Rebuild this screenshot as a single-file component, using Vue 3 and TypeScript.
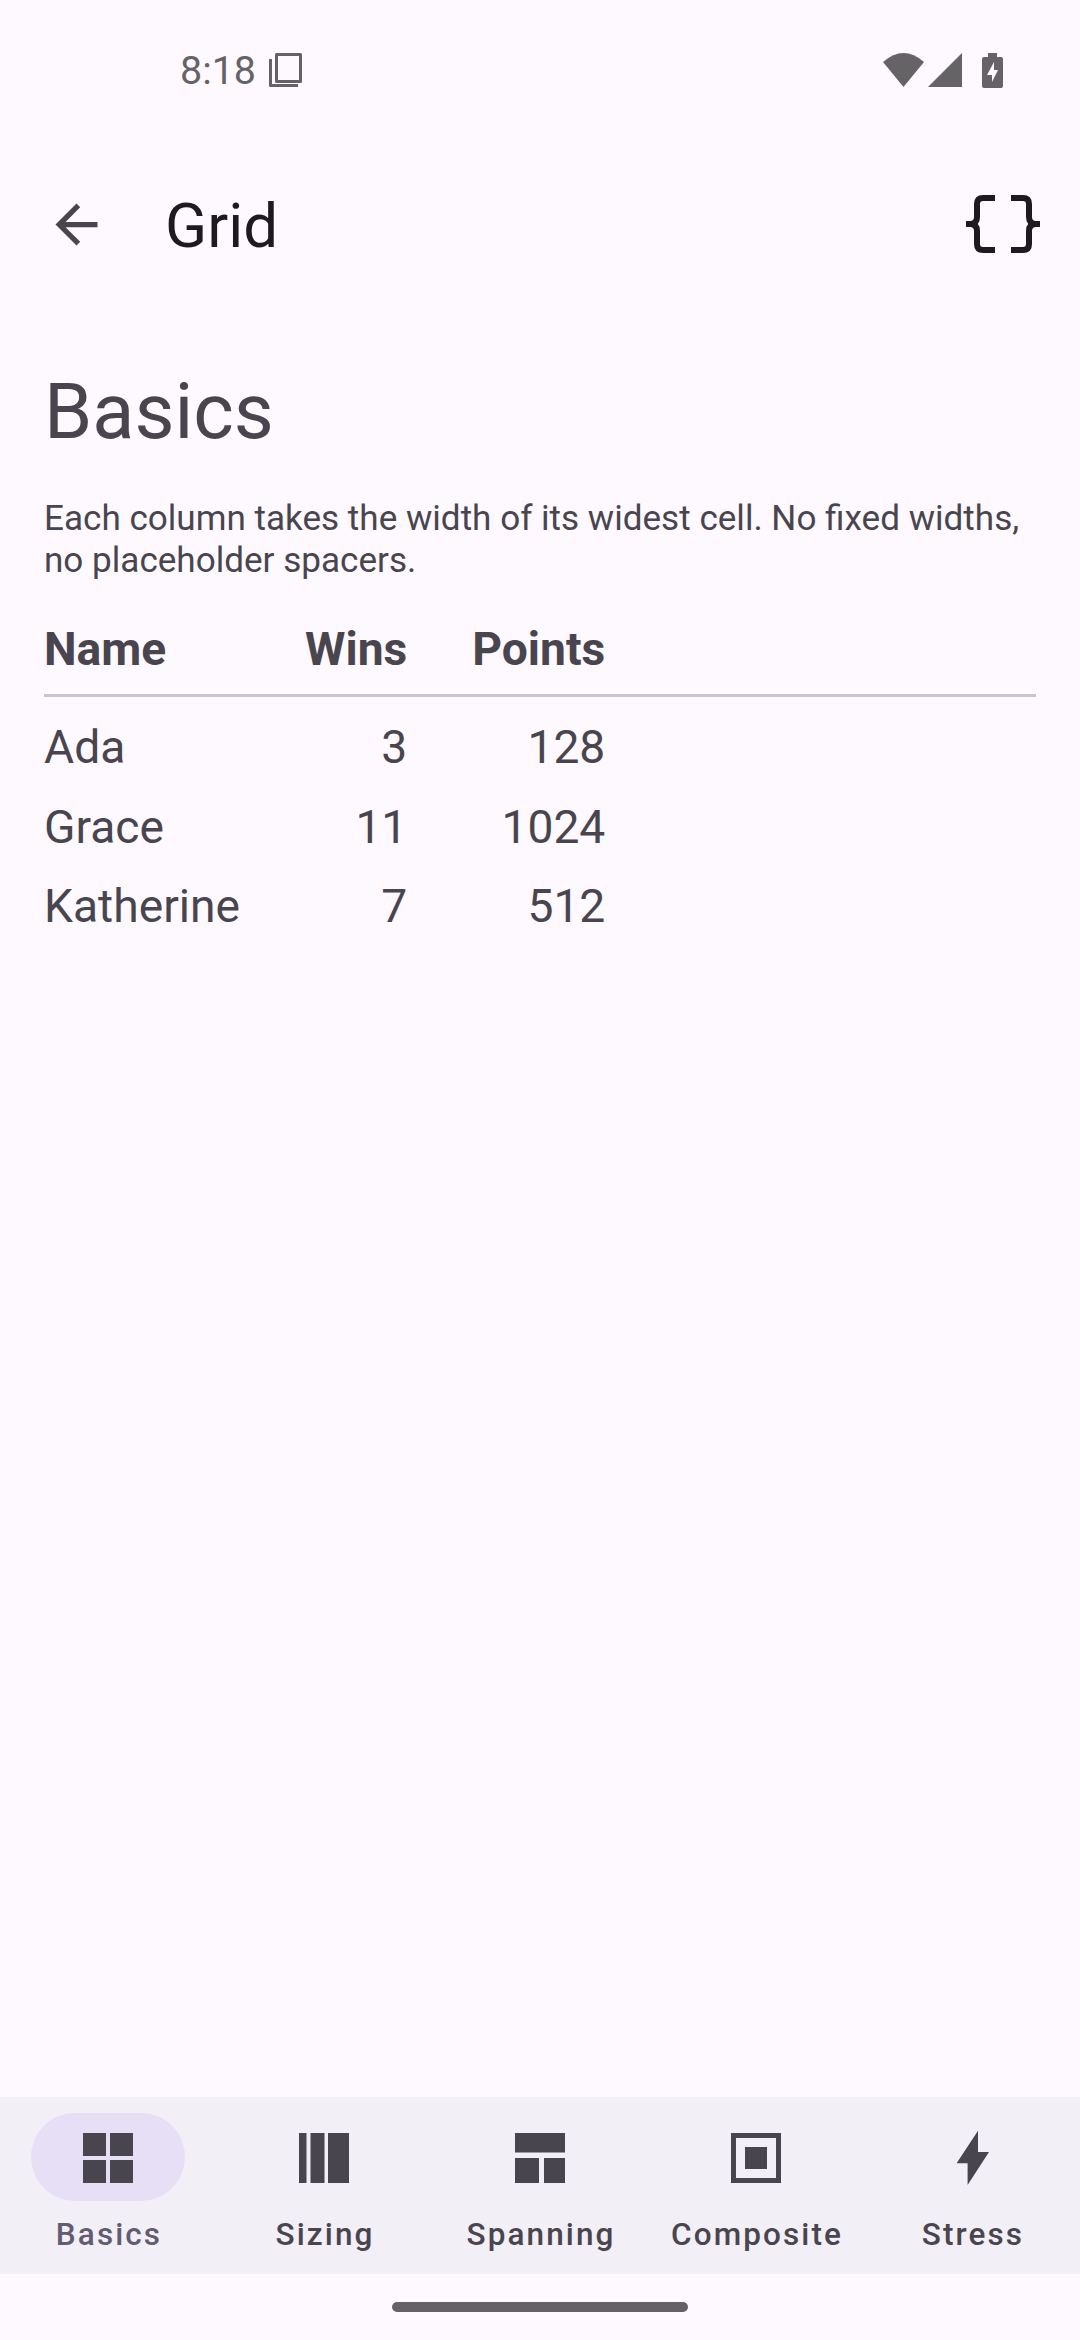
<script setup lang="ts">
interface Rect { x: number; y: number; w: number; h: number }
interface Tab { label: string; rects: Rect[]; path?: string }

const tabs: Tab[] = [
  {
    label: 'Basics',
    rects: [
      { x: 7, y: 7, w: 23, h: 23 },
      { x: 34, y: 7, w: 23, h: 23 },
      { x: 7, y: 34, w: 23, h: 23 },
      { x: 34, y: 34, w: 23, h: 23 },
    ],
  },
  {
    label: 'Sizing',
    rects: [
      { x: 7, y: 7, w: 7.5, h: 50 },
      { x: 18.5, y: 7, w: 14, h: 50 },
      { x: 36, y: 7, w: 21, h: 50 },
    ],
  },
  {
    label: 'Spanning',
    rects: [
      { x: 7, y: 7, w: 50, h: 19.5 },
      { x: 7, y: 32, w: 24, h: 25 },
      { x: 36, y: 32, w: 21, h: 25 },
    ],
  },
  {
    label: 'Composite',
    rects: [],
    path: 'M7 7h50v50H7z M12 12v40h40V12z M21 21h22v22H21z',
  },
  {
    label: 'Stress',
    rects: [],
    path: 'M38 4.7V26H49L27.6 59V37.3H16.6z',
  },
]

const rows = [
  { name: 'Ada', wins: 3, points: 128 },
  { name: 'Grace', wins: 11, points: 1024 },
  { name: 'Katherine', wins: 7, points: 512 },
]
</script>

<template>
  <div class="screen">
    <div class="status">
      <span class="time">8:18</span>
      <svg class="copy" width="33" height="34" viewBox="0 0 33 34">
        <path d="M7.5 1.5h24v27h-24z" fill="none" stroke="#666366" stroke-width="3" stroke-linejoin="round" />
        <path d="M1.5 6v26.5H29" fill="none" stroke="#666366" stroke-width="3" stroke-linejoin="round" />
      </svg>
      <div class="status-right">
        <svg width="41" height="34" viewBox="0 0 41 34">
          <path d="M0 9Q20.500-9 41 9L20.500 34z" fill="#666366" />
        </svg>
        <svg class="signal" width="34" height="34" viewBox="0 0 34 34">
          <path d="M34 0V34H0z" fill="#666366" />
        </svg>
        <svg class="battery" width="21" height="35" viewBox="0 0 21 35">
          <path d="M6 0h9v4h4a2 2 0 0 1 2 2v27a2 2 0 0 1-2 2H2a2 2 0 0 1-2-2V6a2 2 0 0 1 2-2h4z" fill="#666366" />
          <path d="M12 9l-7 13h5v7l6-12h-4z" fill="#fef9ff" />
        </svg>
      </div>
    </div>

    <header class="topbar">
      <svg class="back" width="63" height="63" viewBox="0 0 24 24">
        <path d="M20 11H7.830l5.590-5.590L12 4l-8 8 8 8 1.410-1.410L7.830 13H20v-2z" fill="#49454f" />
      </svg>
      <h1 class="title">Grid</h1>
      <svg class="braces" width="74" height="58" viewBox="0 0 74 58">
        <path d="M29 3H17q-6 0-6 6v13q0 7-7 7H0M29 55H17q-6 0-6-6V36q0-7-7-7" fill="none" stroke="#1d1b20" stroke-width="6" />
        <path d="M45 3H57q6 0 6 6v13q0 7 7 7h4M45 55H57q6 0 6-6V36q0-7 7-7" fill="none" stroke="#1d1b20" stroke-width="6" />
      </svg>
    </header>

    <main class="content">
      <h2 class="heading">Basics</h2>
      <p class="desc">Each column takes the width of its widest cell. No fixed widths, no placeholder spacers.</p>
      <div class="table">
        <span class="th">Name</span>
        <span class="th num">Wins</span>
        <span class="th num">Points</span>
        <div class="divider" />
        <template v-for="row in rows" :key="row.name">
          <span class="td">{{ row.name }}</span>
          <span class="td num">{{ row.wins }}</span>
          <span class="td num">{{ row.points }}</span>
        </template>
      </div>
    </main>

    <nav class="nav">
      <div v-for="(tab, i) in tabs" :key="tab.label" class="tab" :class="{ active: i === 0 }">
        <div class="pill">
          <svg width="64" height="64" viewBox="0 0 64 64">
            <rect v-for="(r, j) in tab.rects" :key="j" :x="r.x" :y="r.y" :width="r.w" :height="r.h" />
            <path v-if="tab.path" :d="tab.path" fill-rule="evenodd" />
          </svg>
        </div>
        <span class="tab-label">{{ tab.label }}</span>
      </div>
    </nav>

    <div class="gesture">
      <div class="handle" />
    </div>
  </div>
</template>

<style>
html,
body {
  margin: 0;
  background: #fef9ff;
}
</style>

<style scoped>
.screen {
  width: 1080px;
  height: 2340px;
  display: flex;
  flex-direction: column;
  background: #fef9ff;
  font-family: Roboto, sans-serif;
  color: #49454f;
  overflow: hidden;
}
.status {
  height: 140px;
  padding: 0 77px 0 180px;
  display: flex;
  align-items: center;
  gap: 13px;
  box-sizing: border-box;
}
.time {
  font-size: 39.4px;
  color: #666366;
}
.status-right {
  margin-left: auto;
  display: flex;
  align-items: center;
}
.signal {
  margin-left: 4px;
}
.battery {
  margin-left: 20px;
}
.topbar {
  height: 168px;
  display: flex;
  align-items: center;
  padding: 0 40px 0 45px;
}
.title {
  margin: 3px 0 0 57px;
  font-size: 61.900px;
  font-weight: 400;
  color: #1d1b20;
}
.braces {
  margin-left: auto;
}
.content {
  flex: 1;
  padding: 53.500px 44px 0;
}
.heading {
  margin: 0;
  font-size: 77.500px;
  font-weight: 400;
  line-height: 100px;
}
.desc {
  margin: 35.500px 0 0;
  font-size: 35.100px;
  line-height: 42px;
}
.table {
  margin-top: 35px;
  display: grid;
  grid-template-columns: repeat(3, auto) 1fr;
  column-gap: 65px;
  font-size: 46.200px;
  align-items: center;
}
.th {
  font-weight: 700;
  line-height: 66px;
}
.td {
  line-height: 79.500px;
}
.td:nth-child(3n + 2) {
  grid-column: 1;
}
.num {
  text-align: right;
}
.divider {
  grid-column: 1 / -1;
  height: 3px;
  margin: 12px 0 11px;
  background: #cac4d0;
}
.nav {
  height: 177px;
  display: flex;
  background: #f2eff7;
}
.tab {
  flex: 1;
  display: flex;
  flex-direction: column;
  align-items: center;
  padding-top: 16px;
}
.pill {
  width: 154px;
  height: 88px;
  border-radius: 44px;
  display: flex;
  align-items: center;
  justify-content: center;
}
.active .pill {
  background: #e7dff6;
}
.pill svg {
  margin-top: 2px;
  fill: #49454f;
}
.tab-label {
  margin-top: 13px;
  padding-left: 2px;
  font-size: 31.500px;
  font-weight: 500;
  line-height: 42px;
  letter-spacing: 2.100px;
}
.active .tab-label {
  color: #625b71;
}
.gesture {
  height: 66px;
  display: flex;
  justify-content: center;
  padding-top: 28px;
  box-sizing: border-box;
}
.handle {
  width: 296px;
  height: 10px;
  border-radius: 5px;
  background: #656265;
}
</style>
